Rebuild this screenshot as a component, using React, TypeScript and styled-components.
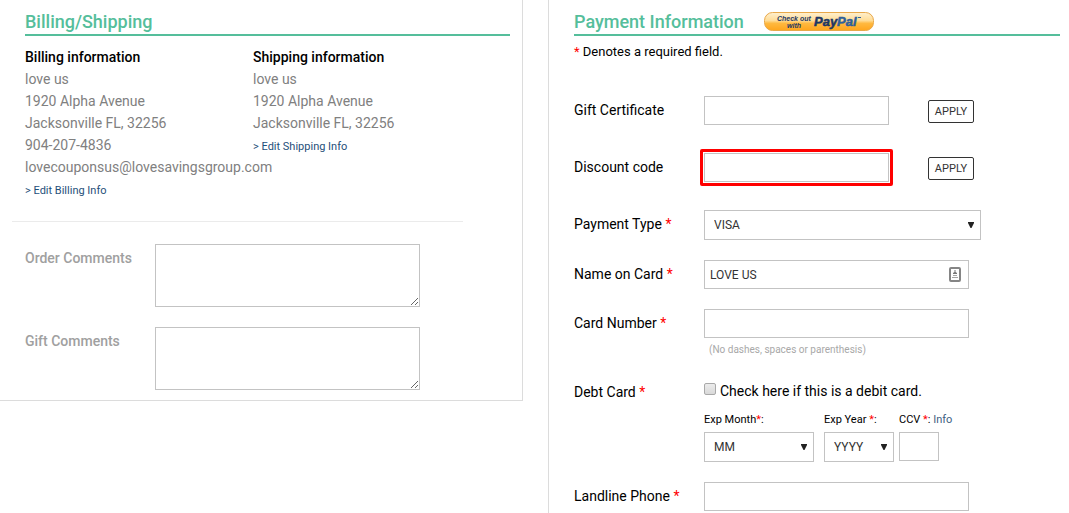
import React from "react";
import styled, { createGlobalStyle } from "styled-components";

const GlobalStyle = createGlobalStyle`
  *, *::before, *::after { box-sizing: border-box; }
  body {
    margin: 0;
    background: #fff;
    color: #000;
    font-family: Roboto, "Liberation Sans", sans-serif;
    font-size: 14px;
    line-height: 22px;
  }
  input, select, textarea, button { font-family: inherit; }
`;

const Page = styled.main`
  display: grid;
  grid-template-columns: minmax(0, 523fr) minmax(0, 521fr);
  column-gap: 25px;
  align-items: start;
  min-height: 100vh;
`;

const BillingPanel = styled.section`
  border: solid #dcdcdc;
  border-width: 0 1px 1px 0;
  padding: 8px 12px 10px;
`;

const PaymentPanel = styled.section`
  align-self: stretch;
  border-left: 1px solid #dcdcdc;
  padding: 8px 9px 2px 25px;
`;

const HeadingBar = styled.header<{ $inset?: boolean }>`
  display: flex;
  align-items: center;
  gap: 20px;
  height: 28px;
  padding-top: 2px;
  margin-left: ${(p) => (p.$inset ? "13px" : "0")};
  border-bottom: 2px solid #55be9b;
`;

const Title = styled.h2`
  margin: 0;
  color: #55be9b;
  font-size: 18px;
  font-weight: 500;
  line-height: 24px;
`;

const PayPalButton = styled.button`
  display: block;
  width: 110px;
  height: 20px;
  padding: 0;
  border: 0;
  background: none;
  cursor: pointer;
`;

const Addresses = styled.div`
  display: grid;
  grid-template-columns: 228px minmax(0, 1fr);
  margin: 10px 0 0 13px;
`;

const Address = styled.address`
  color: #808080;
  font-style: normal;
  white-space: nowrap;
`;

const AddressTitle = styled.h3`
  margin: 0;
  color: #000;
  font-size: 14px;
  font-weight: 500;
  line-height: 22px;
`;

const AddressLine = styled.div`
  line-height: 22px;
`;

const EditLink = styled.a`
  display: block;
  color: #1f4f7a;
  font-size: 11px;
  line-height: 26px;
  text-decoration: none;
`;

const Divider = styled.hr`
  margin: 17px 47px 22px 0;
  border: 0;
  border-top: 1px solid #ebebeb;
`;

const CommentRow = styled.div`
  display: grid;
  grid-template-columns: 130px minmax(0, 265px);
  align-items: start;
  margin-left: 13px;
  & + & { margin-top: 20px; }
`;

const CommentLabel = styled.label`
  padding-top: 3px;
  color: #a0a0a0;
  font-weight: 500;
`;

const CommentBox = styled.textarea`
  display: block;
  width: 100%;
  height: 63px;
  border: 1px solid #c3c3c3;
  background: #fff;
  resize: both;
`;

const RequiredNote = styled.p`
  margin: 5px 0 34px;
  font-size: 13px;
  line-height: 21px;
`;

const Star = styled.span`
  color: #f00;
`;

const FieldRow = styled.div<{ $gap?: number }>`
  display: grid;
  grid-template-columns: 130px minmax(0, 1fr);
  align-items: start;
  margin-bottom: ${(p) => p.$gap ?? 20}px;
`;

const FieldLabel = styled.label`
  padding-top: 3px;
`;

const CodeEntry = styled.div`
  display: flex;
  align-items: center;
  gap: 39px;
`;

const TextInput = styled.input<{ $width: number }>`
  display: block;
  width: 100%;
  max-width: ${(p) => p.$width}px;
  height: 29px;
  padding: 0 5px;
  border: 1px solid #c3c3c3;
  border-radius: 0;
  background: #fff;
  color: #333;
  font-size: 12px;
`;

const Highlight = styled.div`
  width: 100%;
  max-width: 193px;
  margin: -4px;
  padding: 1px;
  border: 3px solid #f00;
  border-radius: 2px;
`;

const ApplyButton = styled.button`
  flex: none;
  width: 46px;
  height: 23px;
  margin-top: 2px;
  padding: 0;
  border: 1px solid #333;
  border-radius: 2px;
  background: #fff;
  color: #333;
  font-size: 11px;
`;

const SelectBox = styled.div<{ $width: number }>`
  position: relative;
  width: 100%;
  max-width: ${(p) => p.$width}px;
`;

const Select = styled.select`
  display: block;
  width: 100%;
  height: 30px;
  padding: 0 18px 0 9px;
  appearance: none;
  border: 1px solid #c3c3c3;
  border-radius: 0;
  background: #fff;
  color: #333;
  font-size: 12px;
`;

const Arrow = styled.svg`
  position: absolute;
  top: 12px;
  right: 7px;
  pointer-events: none;
`;

const InputBox = styled.div`
  position: relative;
  max-width: 265px;
`;

const CardIcon = styled.svg`
  position: absolute;
  top: 7px;
  right: 8px;
`;

const Hint = styled.div`
  padding-left: 5px;
  color: #a8a8a8;
  font-size: 10px;
  line-height: 24px;
`;

const CheckLine = styled.div`
  display: flex;
  align-items: center;
  gap: 4px;
  height: 26px;
`;

const Checkbox = styled.input`
  appearance: none;
  width: 12px;
  height: 12px;
  margin: 0 0 4px;
  border: 1px solid #a9a9a9;
  border-radius: 2px;
  background: linear-gradient(#ececec, #d9d9d9);
  &:checked { background: #555; }
`;

const ExpiryRow = styled.div`
  display: grid;
  grid-template-columns: 110px 70px 60px;
  column-gap: 10px;
  margin-top: 4px;
`;

const SecurityCode = styled.div`
  margin-left: -5px;
`;

const SmallLine = styled.div`
  height: 24px;
  font-size: 11px;
  line-height: 24px;
  white-space: nowrap;
`;

const InfoLink = styled.a`
  color: #3e5f82;
  text-decoration: none;
`;

function SelectField(props: { id: string; value: string; width: number }) {
  return (
    <SelectBox $width={props.width}>
      <Select id={props.id} defaultValue={props.value}>
        <option>{props.value}</option>
      </Select>
      <Arrow width="6" height="6" viewBox="0 0 6 6" aria-hidden="true">
        <path d="M0 0h6v1L3.500 6h-1L0 1z" fill="#222" />
      </Arrow>
    </SelectBox>
  );
}

function Required(props: { id: string; text: string }) {
  return (
    <FieldLabel htmlFor={props.id}>
      {props.text} <Star>*</Star>
    </FieldLabel>
  );
}

function PayPalArt() {
  return (
    <svg width="110" height="20" viewBox="0 0 110 20" aria-hidden="true">
      <defs>
        <linearGradient id="gold" x1="0" y1="0" x2="0" y2="1">
          <stop offset="0" stopColor="#fff0cf" />
          <stop offset="0.450" stopColor="#ffdc96" />
          <stop offset="0.600" stopColor="#ffb940" />
          <stop offset="1" stopColor="#ffa51c" />
        </linearGradient>
      </defs>
      <rect x="0.500" y="0.500" width="109" height="18" rx="8" fill="url(#gold)" stroke="#e8a84a" />
      <g fontFamily="'Liberation Sans', sans-serif" fontWeight="700" fontStyle="italic" fill="#1d3765">
        <text x="13" y="9" fontSize="7">Check out</text>
        <text x="23" y="16" fontSize="7">with</text>
        <text x="50" y="14" fontSize="13" stroke="#1d3765" strokeWidth="0.500">Pay</text>
        <text x="73" y="14" fontSize="13" fill="#2f5f9a" stroke="#2f5f9a" strokeWidth="0.500">Pal</text>
      </g>
      <path d="M94 5.500h3" stroke="#2f5f9a" strokeWidth="1" />
    </svg>
  );
}

export default function App() {
  return (
    <>
      <GlobalStyle />
      <Page>
        <BillingPanel>
          <HeadingBar $inset>
            <Title>Billing/Shipping</Title>
          </HeadingBar>
          <Addresses>
            <Address>
              <AddressTitle>Billing information</AddressTitle>
              <AddressLine>love us</AddressLine>
              <AddressLine>1920 Alpha Avenue</AddressLine>
              <AddressLine>Jacksonville FL, 32256</AddressLine>
              <AddressLine>904-207-4836</AddressLine>
              <AddressLine>lovecouponsus@lovesavingsgroup.com</AddressLine>
              <EditLink href="#billing">&gt; Edit Billing Info</EditLink>
            </Address>
            <Address>
              <AddressTitle>Shipping information</AddressTitle>
              <AddressLine>love us</AddressLine>
              <AddressLine>1920 Alpha Avenue</AddressLine>
              <AddressLine>Jacksonville FL, 32256</AddressLine>
              <EditLink href="#shipping">&gt; Edit Shipping Info</EditLink>
            </Address>
          </Addresses>
          <Divider />
          <CommentRow>
            <CommentLabel htmlFor="order-comments">Order Comments</CommentLabel>
            <CommentBox id="order-comments" />
          </CommentRow>
          <CommentRow>
            <CommentLabel htmlFor="gift-comments">Gift Comments</CommentLabel>
            <CommentBox id="gift-comments" />
          </CommentRow>
        </BillingPanel>

        <PaymentPanel>
          <HeadingBar>
            <Title>Payment Information</Title>
            <PayPalButton type="button" aria-label="Check out with PayPal">
              <PayPalArt />
            </PayPalButton>
          </HeadingBar>
          <RequiredNote>
            <Star>*</Star> Denotes a required field.
          </RequiredNote>

          <FieldRow $gap={28}>
            <FieldLabel htmlFor="gift">Gift Certificate</FieldLabel>
            <CodeEntry>
              <TextInput id="gift" $width={185} />
              <ApplyButton type="button">APPLY</ApplyButton>
            </CodeEntry>
          </FieldRow>
          <FieldRow $gap={28}>
            <FieldLabel htmlFor="discount">Discount code</FieldLabel>
            <CodeEntry>
              <Highlight>
                <TextInput id="discount" $width={185} />
              </Highlight>
              <ApplyButton type="button">APPLY</ApplyButton>
            </CodeEntry>
          </FieldRow>
          <FieldRow>
            <Required id="payment-type" text="Payment Type" />
            <SelectField id="payment-type" value="VISA" width={277} />
          </FieldRow>
          <FieldRow>
            <Required id="card-name" text="Name on Card" />
            <InputBox>
              <TextInput id="card-name" $width={265} defaultValue="LOVE US" />
              <CardIcon width="12" height="15" viewBox="0 0 12 15" aria-hidden="true">
                <rect x="1" y="1" width="10" height="13" rx="1" fill="#fff" stroke="#858585" strokeWidth="2" />
                <path d="M5.500 3h1v2L8 6v1H4V6l1.500-1z" fill="#777" />
                <path d="M4 8h4v1H4zM3 10h6v1H3z" fill="#a5a5a5" />
              </CardIcon>
            </InputBox>
          </FieldRow>
          <FieldRow $gap={16}>
            <Required id="card-number" text="Card Number" />
            <div>
              <TextInput id="card-number" $width={265} />
              <Hint>(No dashes, spaces or parenthesis)</Hint>
            </div>
          </FieldRow>
          <FieldRow>
            <Required id="debit" text="Debt Card" />
            <div>
              <CheckLine>
                <Checkbox type="checkbox" id="debit" />
                <label htmlFor="debit">Check here if this is a debit card.</label>
              </CheckLine>
              <ExpiryRow>
                <div>
                  <SmallLine>
                    <label htmlFor="exp-month">
                      Exp Month<Star>*</Star>:
                    </label>
                  </SmallLine>
                  <SelectField id="exp-month" value="MM" width={110} />
                </div>
                <div>
                  <SmallLine>
                    <label htmlFor="exp-year">
                      Exp Year <Star>*</Star>:
                    </label>
                  </SmallLine>
                  <SelectField id="exp-year" value="YYYY" width={70} />
                </div>
                <SecurityCode>
                  <SmallLine>
                    <label htmlFor="ccv">
                      CCV <Star>*</Star>:
                    </label>{" "}
                    <InfoLink href="#ccv-info">Info</InfoLink>
                  </SmallLine>
                  <TextInput id="ccv" $width={40} />
                </SecurityCode>
              </ExpiryRow>
            </div>
          </FieldRow>
          <FieldRow $gap={0}>
            <Required id="phone" text="Landline Phone" />
            <TextInput id="phone" type="tel" $width={265} />
          </FieldRow>
        </PaymentPanel>
      </Page>
    </>
  );
}
